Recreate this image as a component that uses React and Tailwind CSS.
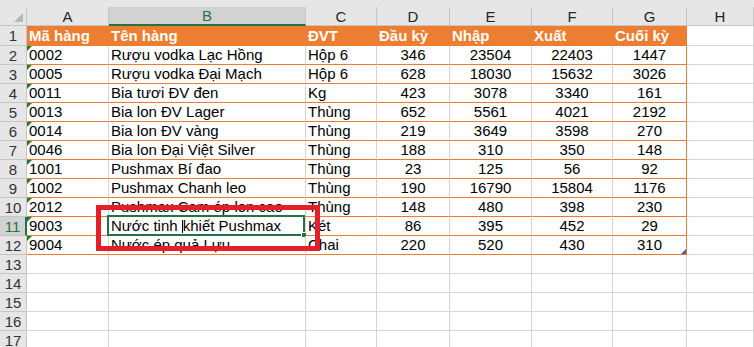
const cols = ['A', 'B', 'C', 'D', 'E', 'F', 'G', 'H']

const widths = {
  A: 'w-[82px]',
  B: 'w-[197px]',
  C: 'w-[71px]',
  D: 'w-[73px]',
  E: 'w-[82px]',
  F: 'w-[81px]',
  G: 'w-[74px]',
  H: 'flex-1',
}

const header = ['Mã hàng', 'Tên hàng', 'ĐVT', 'Đầu kỳ', 'Nhập', 'Xuất', 'Cuối kỳ']

const rows = [
  ['0002', 'Rượu vodka Lạc Hồng', 'Hộp 6', 346, 23504, 22403, 1447],
  ['0005', 'Rượu vodka Đại Mạch', 'Hộp 6', 628, 18030, 15632, 3026],
  ['0011', 'Bia tươi ĐV đen', 'Kg', 423, 3078, 3340, 161],
  ['0013', 'Bia lon ĐV Lager', 'Thùng', 652, 5561, 4021, 2192],
  ['0014', 'Bia lon ĐV vàng', 'Thùng', 219, 3649, 3598, 270],
  ['0046', 'Bia lon Đại Việt Silver', 'Thùng', 188, 310, 350, 148],
  ['1001', 'Pushmax Bí đao', 'Thùng', 23, 125, 56, 92],
  ['1002', 'Pushmax Chanh leo', 'Thùng', 190, 16790, 15804, 1176],
  ['2012', 'Pushmax Cam ép lon cao', 'Thùng', 148, 480, 398, 230],
  ['9003', 'Nước tinh khiết Pushmax', 'Két', 86, 395, 452, 29],
  ['9004', 'Nước ép quả Lựu', 'Chai', 220, 520, 430, 310],
]

function ColumnHeader({ col }) {
  const selected = col === 'B'
  return (
    <div className={`${widths[col]} h-full flex flex-col`}>
      <div
        className={`mt-[7px] flex-1 flex items-center justify-center border-r border-[#c6c6c6] ${
          selected ? 'bg-[#d2d2d2] text-[#217346] border-b-2 border-b-[#217346]' : 'text-[#262626]'
        }`}
      >
        {col}
      </div>
    </div>
  )
}

function RowHeader({ n }) {
  const selected = n === 11
  return (
    <div
      className={`w-[27px] shrink-0 flex items-center justify-center border-b border-[#c6c6c6] ${
        selected
          ? 'bg-[#d2d2d2] text-[#217346] border-r-2 border-r-[#217346]'
          : 'bg-[#e6e6e6] text-[#333333] border-r border-r-[#c6c6c6]'
      }`}
    >
      {n}
    </div>
  )
}

function Cell({ col, rowNo, children }) {
  const inTable = col !== 'H' && rowNo <= 12
  const isTitle = rowNo === 1 && col !== 'H'
  const centered = ['D', 'E', 'F', 'G'].includes(col) && rowNo > 1
  const borders = isTitle
    ? 'bg-[#ed7d31] text-white font-bold border-r border-b border-[#ed7d31]'
    : inTable
      ? `border-b border-b-[#ed7d31] border-r ${col === 'G' ? 'border-r-[#ed7d31]' : 'border-r-[#d4d4d4]'}`
      : 'border-r border-b border-[#d4d4d4]'

  return (
    <div
      className={`${widths[col]} shrink-0 relative whitespace-nowrap px-[2px] flex items-end pb-[1px] ${
        centered ? 'justify-center' : ''
      } ${borders}`}
    >
      {col === 'A' && rowNo > 1 && rowNo <= 12 && (
        <span className="absolute left-0 top-0 w-0 h-0 border-t-[5px] border-t-[#1f7a3c] border-r-[5px] border-r-transparent" />
      )}
      {col === 'B' && rowNo === 11 && (
        <>
          <span className="absolute left-[-2px] top-[-2px] right-0 bottom-[-1px] border-2 border-[#217346]" />
          <span className="absolute right-[-2px] bottom-[-3px] w-[6px] h-[6px] bg-[#217346] border border-white" />
        </>
      )}
      {col === 'G' && rowNo === 12 && (
        <span className="absolute right-0 bottom-0 w-0 h-0 border-l-[5px] border-l-transparent border-b-[5px] border-b-[#4a5bb0]" />
      )}
      <span className="relative">{children}</span>
    </div>
  )
}

export default function App() {
  const allRows = []
  for (let n = 1; n <= 17; n++) allRows.push(n)

  return (
    <div className="w-[754px] h-[347px] overflow-hidden bg-white relative font-['Liberation_Sans',Arial,sans-serif] text-[15px] leading-[17px] text-black">
      {/* column letters */}
      <div className="flex h-[26px] bg-[#e6e6e6] border-b border-[#c6c6c6]">
        <div className="w-[27px] shrink-0 h-full flex flex-col">
          <div className="mt-[7px] flex-1 border-r border-[#c6c6c6] flex items-end justify-end pr-[3px] pb-[3px]">
            <svg width="9" height="9" viewBox="0 0 9 9">
              <polygon points="9,0 9,9 0,9" fill="#b5b5b5" />
            </svg>
          </div>
        </div>
        {cols.map((c) => (
          <ColumnHeader key={c} col={c} />
        ))}
      </div>

      {allRows.map((n) => {
        const data = n === 1 ? header : rows[n - 2]
        return (
          <div key={n} className={`flex ${n === 1 ? 'h-[20px]' : 'h-[19px]'}`}>
            <RowHeader n={n} />
            {cols.map((c, i) => {
              let content = data && c !== 'H' ? data[i] : null
              if (n === 11 && c === 'B') {
                content = (
                  <>
                    Nước tinh{' '}
                    <span className="inline-block w-px h-[13px] bg-black align-[-2px]" />
                    khiết Pushmax
                  </>
                )
              }
              return (
                <Cell key={c} col={c} rowNo={n}>
                  {content}
                </Cell>
              )
            })}
          </div>
        )
      })}

      {/* red annotation box */}
      <div className="absolute left-[96px] top-[205px] w-[224px] h-[46px] border-[5px] border-[#e3202a]" />
    </div>
  )
}
